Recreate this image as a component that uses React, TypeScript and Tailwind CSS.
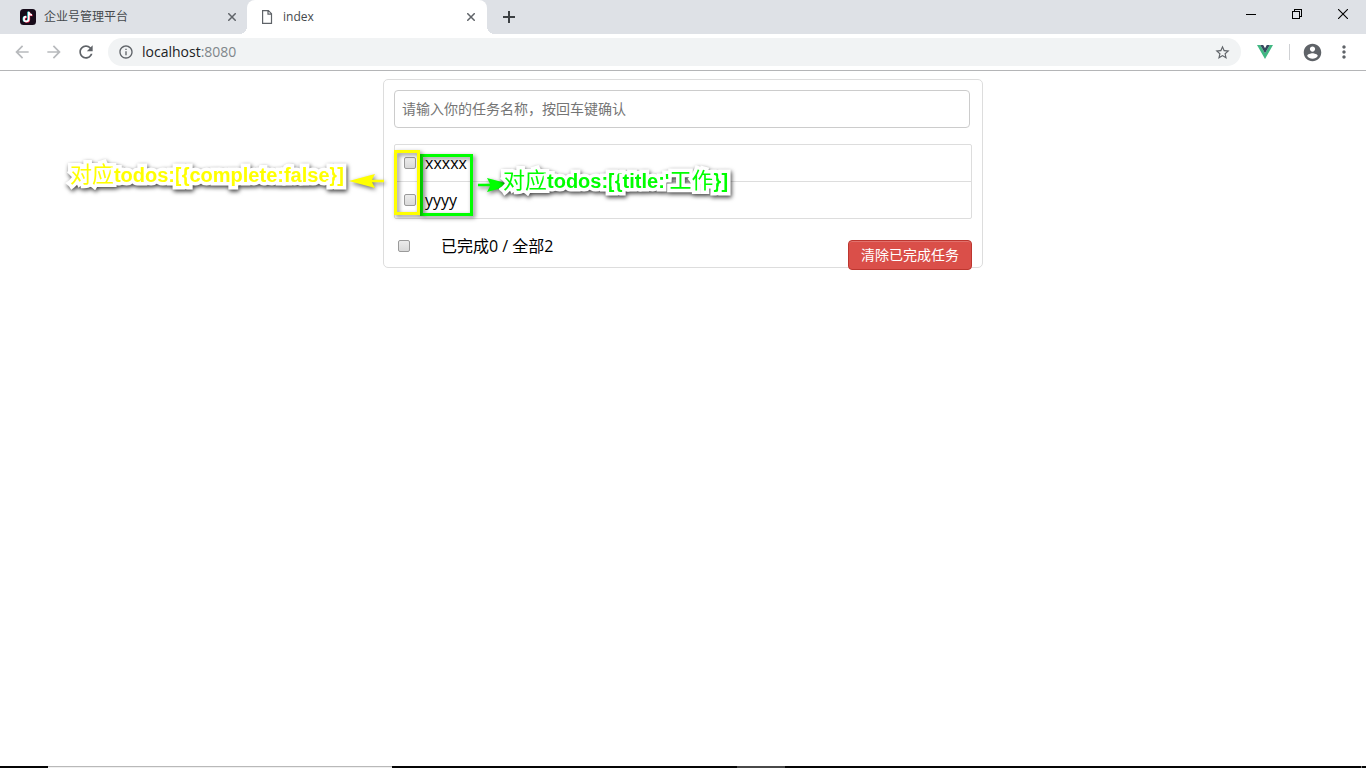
import { useState } from "react";
import type { ReactNode } from "react";

type Todo = { id: number; title: string; complete: boolean };

const initialTodos: Todo[] = [
  { id: 1, title: "xxxxx", complete: false },
  { id: 2, title: "yyyy", complete: false },
];

const checkboxClass =
  "size-3 shrink-0 appearance-none rounded-xs border border-[#9a9a9a] bg-linear-to-b from-[#ececec] to-[#d9d9d9] checked:bg-[#777] checked:bg-none";

function Glyph({ d, className }: { d: string; className: string }) {
  return (
    <svg viewBox="0 0 24 24" fill="currentColor" className={className} aria-hidden="true">
      <path d={d} />
    </svg>
  );
}

function TabClose() {
  return (
    <button type="button" aria-label="关闭标签页" className="flex size-4 items-center justify-center text-[#5f6368]">
      <svg viewBox="0 0 8 8" className="size-2" fill="none" stroke="currentColor" strokeWidth="1.5" aria-hidden="true">
        <path d="M.2 .2l7.6 7.6M7.8 .2l-7.6 7.6" />
      </svg>
    </button>
  );
}

function Tab({ active, icon, title }: { active?: boolean; icon: ReactNode; title: string }) {
  return (
    <div
      className={
        active
          ? "relative flex h-full w-60 items-center rounded-t-lg bg-white pr-2 pl-3"
          : "flex h-full w-[247px] items-center pr-[7px] pl-5"
      }
    >
      {active && (
        <>
          <span className="absolute bottom-0 -left-2 size-2 bg-[radial-gradient(circle_at_0_0,#dee1e6_8px,#fff_8px)]" />
          <span className="absolute -right-2 bottom-0 size-2 bg-[radial-gradient(circle_at_100%_0,#dee1e6_8px,#fff_8px)]" />
        </>
      )}
      {icon}
      <span className="ml-2 flex-1 truncate text-xs text-[#45494d]">{title}</span>
      <TabClose />
    </div>
  );
}

function TikTokIcon() {
  const note = "M8.7 2.8v7.2a2.4 2.4 0 1 1-2.4-2.4M8.7 2.8c.2 2 1.5 3 3.3 3.1";
  return (
    <svg viewBox="0 0 16 16" className="size-4" fill="none" strokeWidth="1.7" aria-hidden="true">
      <rect width="16" height="16" rx="3.5" fill="#170b1a" />
      <path d={note} stroke="#25f4ee" transform="translate(-.5 -.1)" />
      <path d={note} stroke="#fe2c55" transform="translate(.6 .6)" />
      <path d={note} stroke="#fff" />
    </svg>
  );
}

function PageIcon() {
  return (
    <svg viewBox="0 0 16 16" className="size-4" fill="none" stroke="#5f6368" strokeWidth="1.2" aria-hidden="true">
      <path d="M3.6 1.6h5.8l3.1 3.1v9.7H3.6zM9 1.6v3.5h3.5" />
    </svg>
  );
}

function BrowserChrome() {
  return (
    <header>
      <div className="flex h-[34px] items-start bg-[#dee1e6]">
        <Tab icon={<TikTokIcon />} title="企业号管理平台" />
        <Tab active icon={<PageIcon />} title="index" />
        <button type="button" aria-label="新标签页" className="ml-3 flex h-full w-5 items-center justify-center">
          <svg viewBox="0 0 12 12" className="size-3" stroke="#3c4043" strokeWidth="2" aria-hidden="true">
            <path d="M6 0v12M0 6h12" />
          </svg>
        </button>
        <div className="ml-auto flex h-7">
          <button type="button" aria-label="最小化" className="flex w-[46px] items-center justify-center">
            <svg viewBox="0 0 10 10" className="size-2.5" stroke="#000" shapeRendering="crispEdges" aria-hidden="true">
              <path d="M0 5.5h10" />
            </svg>
          </button>
          <button type="button" aria-label="还原" className="flex w-[46px] items-center justify-center">
            <svg viewBox="0 0 10 10" className="size-2.5" fill="none" stroke="#000" shapeRendering="crispEdges" aria-hidden="true">
              <path d="M.5 2.5h7v7h-7zM2.5 2.5v-2h7v7h-2" />
            </svg>
          </button>
          <button type="button" aria-label="关闭" className="flex w-[46px] items-center justify-center">
            <svg viewBox="0 0 10 10" className="size-2.5" stroke="#000" strokeWidth="1.1" aria-hidden="true">
              <path d="M0 0l10 10M10 0L0 10" />
            </svg>
          </button>
        </div>
      </div>
      <div className="flex h-[37px] items-center border-b border-[#b4b5b7] bg-white pr-3 pl-3 text-[#5f6368]">
        <button type="button" aria-label="后退" className="text-[#b8babd]">
          <Glyph className="size-5" d="M20 11H7.83l5.59-5.59L12 4l-8 8 8 8 1.41-1.41L7.83 13H20v-2z" />
        </button>
        <button type="button" aria-label="前进" className="ml-3 text-[#b8babd]">
          <Glyph className="size-5" d="M12 4l-1.41 1.41L16.17 11H4v2h12.17l-5.58 5.59L12 20l8-8z" />
        </button>
        <button type="button" aria-label="重新加载" className="ml-3">
          <Glyph
            className="size-5"
            d="M17.65 6.35C16.2 4.9 14.21 4 12 4c-4.42 0-7.99 3.58-7.99 8s3.57 8 7.99 8c3.73 0 6.84-2.55 7.73-6h-2.08c-.82 2.33-3.04 4-5.65 4-3.31 0-6-2.69-6-6s2.69-6 6-6c1.66 0 3.14.69 4.22 1.78L13 11h7V4l-2.35 2.35z"
          />
        </button>
        <div className="ml-3 flex h-7 flex-1 items-center rounded-full bg-[#f1f3f4] px-2.5">
          <Glyph
            className="size-4"
            d="M11 7h2v2h-2zm0 4h2v6h-2zm1-9C6.48 2 2 6.48 2 12s4.48 10 10 10 10-4.48 10-10S17.52 2 12 2zm0 18c-4.41 0-8-3.59-8-8s3.59-8 8-8 8 3.59 8 8-3.59 8-8 8z"
          />
          <span className="ml-2 flex-1 text-sm text-[#80868b]">
            <span className="text-[#202124]">localhost</span>:8080
          </span>
          <button type="button" aria-label="为此网页添加书签">
            <Glyph
              className="size-[17px]"
              d="M22 9.24l-7.19-.62L12 2 9.19 8.63 2 9.24l5.46 4.73L5.82 21 12 17.27 18.18 21l-1.63-7.03L22 9.24zM12 15.4l-3.76 2.27 1-4.28-3.32-2.88 4.38-.38L12 6.1l1.71 4.04 4.38.38-3.32 2.88 1 4.28L12 15.4z"
            />
          </button>
        </div>
        <button type="button" aria-label="Vue.js devtools" className="ml-4">
          <svg viewBox="0 0 16 14" className="h-3.5 w-4" aria-hidden="true">
            <path d="M0 0h3.2L8 8.3 12.8 0H16L8 14z" fill="#41b883" />
            <path d="M3.2 0h3L8 3.2 9.8 0h3L8 8.3z" fill="#35495e" />
          </svg>
        </button>
        <span className="ml-4 h-4 w-px bg-[#cfd1d4]" />
        <button type="button" aria-label="用户" className="ml-3">
          <Glyph
            className="size-[21px]"
            d="M12 2C6.48 2 2 6.48 2 12s4.48 10 10 10 10-4.48 10-10S17.52 2 12 2zm0 3c1.66 0 3 1.34 3 3s-1.34 3-3 3-3-1.34-3-3 1.34-3 3-3zm0 14.2c-2.5 0-4.71-1.28-6-3.22.03-1.99 4-3.08 6-3.08 1.99 0 5.97 1.09 6 3.08-1.29 1.94-3.5 3.22-6 3.22z"
          />
        </button>
        <button type="button" aria-label="更多" className="ml-[11px]">
          <Glyph
            className="size-5"
            d="M12 8c1.1 0 2-.9 2-2s-.9-2-2-2-2 .9-2 2 .9 2 2 2zm0 2c-1.1 0-2 .9-2 2s.9 2 2 2 2-.9 2-2-.9-2-2-2zm0 6c-1.1 0-2 .9-2 2s.9 2 2 2 2-.9 2-2-.9-2-2-2z"
          />
        </button>
      </div>
    </header>
  );
}

const noteClass =
  "absolute font-['Liberation_Sans','Noto_Sans_CJK_SC',sans-serif] text-xl leading-6 font-bold whitespace-nowrap [-webkit-text-stroke:7px_#fff] [paint-order:stroke_fill] [stroke-linejoin:round] drop-shadow-[1px_2px_2px_rgba(0,0,0,0.75)]";

function Han({ children }: { children: string }) {
  return <span className="font-['Noto_Sans_CJK_SC',sans-serif] text-[22px] leading-6 font-normal">{children}</span>;
}

function Annotations() {
  return (
    <div className="pointer-events-none absolute inset-0">
      <div className="absolute top-[74px] left-9 h-[62px] w-[53px] border-3 border-[#00ff00] drop-shadow-[2px_2px_2px_rgba(0,0,0,0.5)]" />
      <div className="absolute top-[70px] left-2.5 h-[65px] w-[26px] border-3 border-[#ffff00] drop-shadow-[2px_2px_2px_rgba(0,0,0,0.5)]" />
      <svg
        viewBox="0 0 36 16"
        className="absolute top-[93px] -left-9 h-4 w-9 drop-shadow-[1px_2px_2px_rgba(0,0,0,0.55)]"
        fill="#ffff00"
        aria-hidden="true"
      >
        <path d="M1 8L27 1l-3 5.7h12v2.6H24l3 5.7z" />
      </svg>
      <svg
        viewBox="0 0 36 16"
        className="absolute top-[97px] left-[94px] h-4 w-9 drop-shadow-[1px_2px_2px_rgba(0,0,0,0.55)]"
        fill="#00ff00"
        aria-hidden="true"
      >
        <path d="M35 8L9 1l3 5.7H0v2.6h12L9 15z" />
      </svg>
      <div className={`${noteClass} top-20 right-[638px] text-[#ffff00]`}>
        <Han>对应</Han>todos:[{"{"}complete:false{"}"}]
      </div>
      <div className={`${noteClass} top-[86px] left-[119px] text-[#00ff00]`}>
        <Han>对应</Han>todos:[{"{"}title:'<Han>工作</Han>{"}"}]
      </div>
    </div>
  );
}

function TodoApp() {
  const [todos, setTodos] = useState<Todo[]>(initialTodos);
  const [draft, setDraft] = useState("");
  const done = todos.filter((t) => t.complete).length;

  const addTodo = () => {
    const title = draft.trim();
    if (!title) return;
    setTodos([{ id: Date.now(), title, complete: false }, ...todos]);
    setDraft("");
  };

  return (
    <div className="relative mx-auto mt-2 w-full max-w-[600px] rounded-[5px] border border-[#ddd] px-2.5 pt-2.5">
      <div className="pr-0.5">
        <input
          type="text"
          aria-label="任务名称"
          value={draft}
          onChange={(e) => setDraft(e.target.value)}
          onKeyDown={(e) => e.key === "Enter" && addTodo()}
          placeholder="请输入你的任务名称，按回车键确认"
          className="block h-[38px] w-full rounded-sm border border-[#ccc] px-[7px] pb-0.5 text-sm outline-none placeholder:text-[#757575]"
        />
      </div>
      <ul className="mt-4 rounded-xs border border-[#ddd]">
        {todos.map((todo) => (
          <li key={todo.id} className="h-[37px] border-b border-[#ddd] px-[9px] last:h-9 last:border-b-0">
            <label className="flex h-9 items-center gap-[9px]">
              <input
                type="checkbox"
                checked={todo.complete}
                onChange={() => setTodos(todos.map((t) => (t.id === todo.id ? { ...t, complete: !t.complete } : t)))}
                className={checkboxClass}
              />
              <span>{todo.title}</span>
            </label>
          </li>
        ))}
      </ul>
      <div className="mt-2 flex h-10 items-start">
        <label className="ml-1 flex h-[38px] items-center">
          <input
            type="checkbox"
            aria-label="全选"
            checked={todos.length > 0 && done === todos.length}
            onChange={(e) => setTodos(todos.map((t) => ({ ...t, complete: e.target.checked })))}
            className={checkboxClass}
          />
        </label>
        <span className="ml-[31px] leading-[38px]">
          已完成{done} / 全部{todos.length}
        </span>
        <button
          type="button"
          onClick={() => setTodos(todos.filter((t) => !t.complete))}
          className="mt-[13px] ml-auto h-[30px] rounded-sm border border-[#bd362f] bg-[#da4f49] px-3 text-sm text-white shadow-[inset_0_1px_0_rgba(255,255,255,0.2)]"
        >
          清除已完成任务
        </button>
      </div>
      <Annotations />
    </div>
  );
}

export default function App() {
  return (
    <div className="flex min-h-screen flex-col overflow-x-hidden bg-white font-['Open_Sans','Noto_Sans_CJK_SC',sans-serif] text-base text-black">
      <BrowserChrome />
      <main className="flex-1">
        <TodoApp />
      </main>
      <footer className="flex h-0.5 bg-[#050505]">
        <span className="ml-12 w-[344px] border-t border-[#b9b9b9] bg-[#f0f0f0]" />
        <span className="ml-[345px] w-12 bg-[#484848]" />
        <span className="mr-1 ml-auto w-px bg-[#777]" />
      </footer>
    </div>
  );
}
